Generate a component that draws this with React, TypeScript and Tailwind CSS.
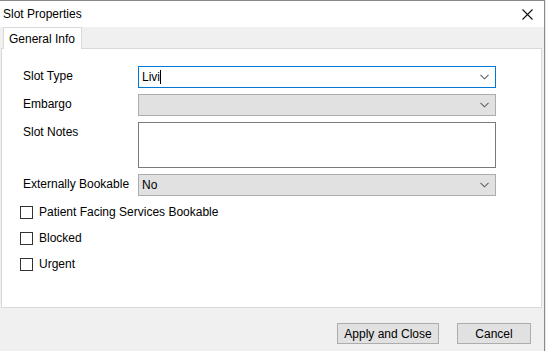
import React from 'react';

function Chevron() {
  return (
    <svg width="9" height="6" viewBox="0 0 9 6" className="mr-[6px]">
      <path d="M0.5 0.8 L4.5 4.8 L8.5 0.8" fill="none" stroke="#606060" strokeWidth="1.1" />
    </svg>
  );
}

function Checkbox({ label }: { label: string }) {
  return (
    <div className="flex items-center h-[26px]">
      <div className="w-[13px] h-[13px] border border-[#333] bg-white" />
      <span className="ml-[6px]">{label}</span>
    </div>
  );
}

export default function App() {
  return (
    <div
      className="w-[546px] h-[351px] bg-[#e8e8e8] flex text-[12px] text-black overflow-hidden"
      style={{ fontFamily: '"Liberation Sans", Arial, sans-serif' }}
    >
      <div className="w-[545px] h-full border-t border-r border-[#8a8a8a] flex flex-col bg-[#f0f0f0]">
        {/* title bar */}
        <div className="h-[26px] bg-white flex items-center justify-between pl-[3px] pr-[11px]">
          <span>Slot Properties</span>
          <svg width="11" height="11" viewBox="0 0 11 11">
            <path d="M0.5 0.5 L10.5 10.5 M10.5 0.5 L0.5 10.5" stroke="#111" strokeWidth="1.1" />
          </svg>
        </div>

        {/* tabs */}
        <div className="h-[21px] flex pl-[3px]">
          <div className="w-[79px] h-[22px] bg-white border border-b-0 border-[#d9d9d9] flex items-center pl-[5px] relative z-10">
            General Info
          </div>
        </div>

        {/* panel */}
        <div className="ml-[1px] w-[541px] h-[260px] bg-white border border-[#d9d9d9] pt-[17px] pl-[18px]">
          <div className="grid grid-cols-[115px_358px] gap-y-[6px] pl-[3px]">
            <div className="pt-[2px] leading-[16px]">Slot Type</div>
            <div className="h-[22px] border border-[#0078d7] flex items-center justify-between pl-[3px]">
              <span className="flex items-center">
                Livi
                <span className="inline-block w-[1px] h-[14px] bg-black" />
              </span>
              <Chevron />
            </div>

            <div className="pt-[2px] leading-[16px]">Embargo</div>
            <div className="h-[22px] border border-[#adadad] bg-[#e1e1e1] flex items-center justify-end">
              <Chevron />
            </div>

            <div className="pt-[2px] leading-[16px]">Slot Notes</div>
            <div className="h-[46px] border border-[#7a7a7a] bg-white" />

            <div className="pt-[2px] leading-[16px]">Externally Bookable</div>
            <div className="h-[22px] border border-[#adadad] bg-[#e1e1e1] flex items-center justify-between pl-[3px]">
              <span>No</span>
              <Chevron />
            </div>
          </div>

          <div className="flex flex-col mt-[3px]">
            <Checkbox label="Patient Facing Services Bookable" />
            <Checkbox label="Blocked" />
            <Checkbox label="Urgent" />
          </div>
        </div>

        {/* footer */}
        <div className="flex justify-end gap-[18px] pt-[15px] pr-[13px]">
          <button className="w-[102px] h-[21px] bg-[#e1e1e1] border border-[#adadad]">Apply and Close</button>
          <button className="w-[74px] h-[21px] bg-[#e1e1e1] border border-[#adadad]">Cancel</button>
        </div>
      </div>
    </div>
  );
}
